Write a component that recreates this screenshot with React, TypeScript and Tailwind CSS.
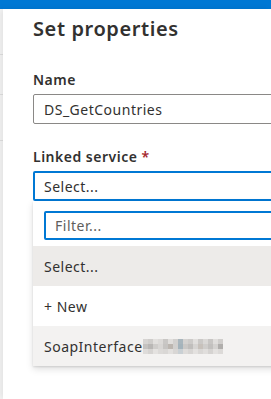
import React from "react";

const blur: string[][] = [
  ["#d6d4d2", "#cfcdcb", "#e2e0de", "#dcdad8", "#c9c7c5", "#e0dedc", "#d2d0ce", "#a9b6bd", "#d4d2d0", "#cdcbc9", "#e1dfdd", "#cbc9c7", "#dad8d6", "#c8c6c4", "#e0dedc", "#d0cecc"],
  ["#c4c2c0", "#b9b7b5", "#cfcdcb", "#d8d6d4", "#c6c4c2", "#bcb6b0", "#d2d0ce", "#a4b3bb", "#cac8c6", "#c0bebc", "#d6d4d2", "#c7c1bb", "#cfcdcb", "#c2c0be", "#d4d2d0", "#b0aeac"],
  ["#dedcda", "#d6d4d2", "#e4e2e0", "#dcdad8", "#d9d7d5", "#e2e0de", "#d8d6d4", "#c9d0d4", "#dedcda", "#d7d5d3", "#e3e1df", "#d9d7d5", "#e0dedc", "#d5d3d1", "#e3e1df", "#dcdad8"],
];

export default function App() {
  const font = { fontFamily: '"Segoe UI", "Noto Sans", "Open Sans", sans-serif' };
  return (
    <div className="w-[271px] h-[399px] flex flex-col overflow-hidden bg-white text-[#323130]" style={font}>
      <div className="h-[9px] shrink-0 bg-[#0078d4]" />
      <div className="flex flex-1 min-h-0">
        <div className="w-[3px] shrink-0 bg-[#f6f6f6] flex flex-col">
          <div className="h-[45px]" />
          <div className="h-px bg-[#e1e1e1]" />
          <div className="h-[39px]" />
          <div className="h-px bg-[#e1e1e1]" />
          <div className="h-[45px]" />
          <div className="h-px bg-[#e1e1e1]" />
        </div>
        <div className="relative flex-1 min-w-0 bg-white pl-[30px] shadow-[-3px_0_6px_rgba(0,0,0,0.08)] overflow-hidden">
          <div className="w-[320px] text-[14px] tracking-[0.5px]">
            <div className="mt-[6px] text-[20px] leading-[28px] font-semibold tracking-[0.6px]">Set properties</div>
            <div className="mt-[27px] leading-[20px] font-semibold">Name</div>
            <div className="mt-[4px] h-[30px] border border-[#8a8886] rounded-[2px] flex items-center pl-[10px]">
              DS_GetCountries
            </div>
            <div className="mt-[23px] leading-[20px] font-semibold">
              Linked service <span className="text-[#a4262c]">*</span>
            </div>
            <div className="mt-[4px] h-[30px] border-2 border-[#0078d4] rounded-[2px] flex items-center pl-[9px]">
              Select...
            </div>
            <div className="bg-white shadow-[0_3.2px_7.2px_rgba(0,0,0,0.132),0_0.6px_1.8px_rgba(0,0,0,0.108)]">
              <div className="pt-[10px] pl-[11px] pb-[6px]">
                <div className="h-[29px] border-2 border-[#0078d4] rounded-[2px] flex items-center pl-[9px] text-[#605e5c]">
                  Filter...
                </div>
              </div>
              <div className="h-[40px] bg-[#edebe9] flex items-center pl-[11px]">Select...</div>
              <div className="h-[40px] bg-white flex items-center pl-[11px]">+ New</div>
              <div className="h-[40px] bg-[#f3f2f1] flex items-center pl-[11px]">
                <span>SoapInterface</span>
                <div className="flex flex-col">
                  {blur.map((row, i) => (
                    <div key={i} className="flex">
                      {row.map((c, j) => (
                        <div key={j} className="w-[5px] h-[5px]" style={{ backgroundColor: c }} />
                      ))}
                    </div>
                  ))}
                </div>
              </div>
            </div>
          </div>
        </div>
      </div>
    </div>
  );
}
